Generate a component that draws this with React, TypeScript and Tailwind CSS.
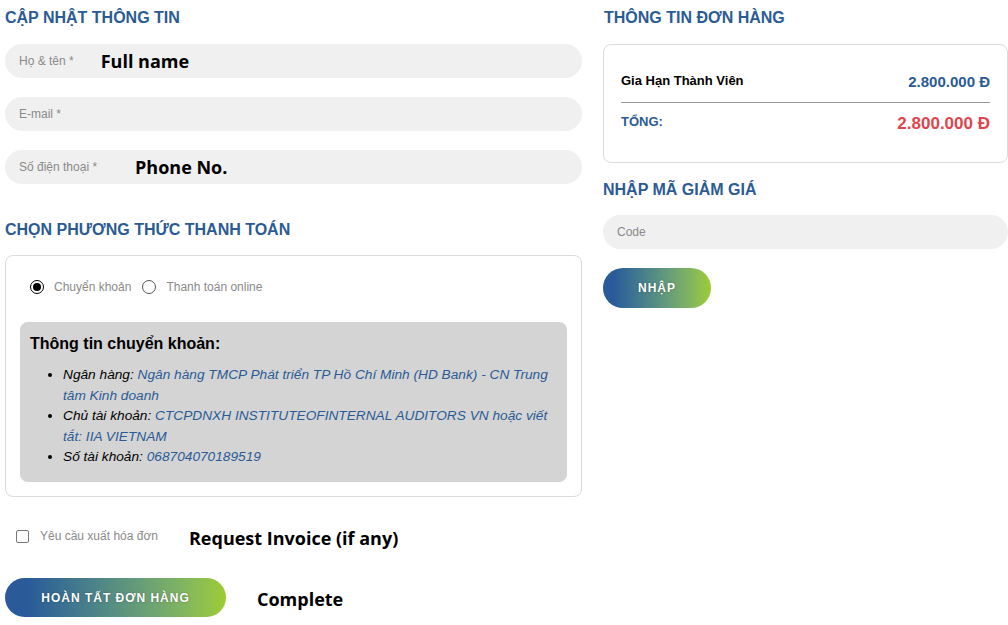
import React from 'react';

const heading = "text-[16px] leading-[18px] font-bold text-[#2b5b94] font-['Liberation_Sans',Arial,sans-serif]";
const note = "font-['Open_Sans',sans-serif] font-bold text-[18px] leading-[22px] text-black";

const Pill: React.FC<{ placeholder: string; note?: string; noteLeft?: string; className?: string }> = ({ placeholder, note: label, noteLeft, className }) => (
  <div className={`h-[34px] rounded-full bg-[#f0f0f0] flex items-center pl-[14px] ${className ?? ''}`}>
    <span className="text-[12px] text-[#8a8a8a]">{placeholder}</span>
    {label && <span className={`${note} ${noteLeft}`}>{label}</span>}
  </div>
);

const GradientButton: React.FC<{ label: string; className?: string }> = ({ label, className }) => (
  <button
    type="button"
    className={`rounded-full bg-linear-to-r from-[#2a5a99] from-10% to-[#9dcc30] text-white font-bold text-[12px] tracking-[1px] [text-shadow:0_0_2px_rgba(0,0,0,0.35)] ${className ?? ''}`}
  >
    {label}
  </button>
);

export default function App() {
  return (
    <div className="w-[1008px] h-[625px] overflow-hidden bg-white pl-[5px] font-['Liberation_Sans',Arial,sans-serif]">
      <div className="grid grid-cols-[577px_1fr] gap-x-[21px]">
        {/* left column */}
        <div className="flex flex-col">
          <h2 className={`${heading} mt-[9px]`}>CẬP NHẬT THÔNG TIN</h2>
          <Pill className="mt-[17px]" placeholder="Họ & tên *" note="Full name" noteLeft="ml-[27px]" />
          <Pill className="mt-[19px]" placeholder="E-mail *" />
          <Pill className="mt-[19px]" placeholder="Số điện thoại *" note="Phone No." noteLeft="ml-[38px]" />

          <h2 className={`${heading} mt-[37px]`}>CHỌN PHƯƠNG THỨC THANH TOÁN</h2>

          <div className="mt-[16px] h-[242px] border border-[#dcdcdc] rounded-[8px] flex flex-col">
            <div className="flex items-center mt-[23px] ml-[24px] h-[16px] text-[12px] text-[#8a8a8a]">
              <span className="w-[14px] h-[14px] rounded-full border-[1.5px] border-black flex items-center justify-center">
                <span className="w-[8px] h-[8px] rounded-full bg-black" />
              </span>
              <span className="ml-[10px]">Chuyển khoản</span>
              <span className="ml-[11px] w-[14px] h-[14px] rounded-full border-[1.5px] border-[#555]" />
              <span className="ml-[10px]">Thanh toán online</span>
            </div>

            <div className="mt-[27px] mx-[14px] h-[160px] rounded-[8px] bg-[#d4d4d4] pl-[10px] pr-[6px] pt-[12px]">
              <h3 className="text-[16px] leading-[20px] font-bold text-black">Thông tin chuyển khoản:</h3>
              <ul className="list-disc pl-[33px] mt-[11px] text-[13.7px] leading-[20.5px] italic text-black">
                <li>
                  Ngân hàng: <span className="text-[#2b5b94]">Ngân hàng TMCP Phát triển TP Hồ Chí Minh (HD Bank) - CN Trung tâm Kinh doanh</span>
                </li>
                <li>
                  Chủ tài khoản: <span className="text-[#2b5b94]">CTCPDNXH INSTITUTEOFINTERNAL AUDITORS VN hoặc viết tắt: IIA VIETNAM</span>
                </li>
                <li>
                  Số tài khoản: <span className="text-[#2b5b94]">068704070189519</span>
                </li>
              </ul>
            </div>
          </div>

          <div className="flex items-center mt-[30px] h-[18px]">
            <span className="ml-[11px] w-[13px] h-[13px] border border-[#777] rounded-[2px]" />
            <span className="ml-[11px] text-[12px] text-[#8a8a8a]">Yêu cầu xuất hóa đơn</span>
            <span className={`${note} ml-[31px] mt-[4px]`}>Request Invoice (if any)</span>
          </div>

          <div className="flex items-center mt-[33px]">
            <GradientButton label="HOÀN TẤT ĐƠN HÀNG" className="w-[221px] h-[39px]" />
            <span className={`${note} ml-[31px] mt-[2px]`}>Complete</span>
          </div>
        </div>

        {/* right column */}
        <div className="flex flex-col">
          <h2 className={`${heading} mt-[9px] ml-[1px]`}>THÔNG TIN ĐƠN HÀNG</h2>
          <div className="mt-[17px] h-[119px] border border-[#dcdcdc] rounded-[8px] px-[17px] pt-[26px]">
            <div className="flex items-center justify-between h-[20px]">
              <span className="text-[13px] font-bold text-black">Gia Hạn Thành Viên</span>
              <span className="text-[15px] font-bold text-[#2b5b94] mt-[2px]">2.800.000 Đ</span>
            </div>
            <div className="mt-[11px] border-t border-[#9a9a9a]" />
            <div className="flex items-start justify-between mt-[8px]">
              <span className="text-[13px] font-bold text-[#2b5b94] mt-[1px]">TỔNG:</span>
              <span className="text-[17px] font-bold text-[#e2444b]">2.800.000 Đ</span>
            </div>
          </div>

          <h2 className={`${heading} mt-[18px]`}>NHẬP MÃ GIẢM GIÁ</h2>
          <Pill className="mt-[16px]" placeholder="Code" />
          <GradientButton label="NHẬP" className="mt-[19px] w-[108px] h-[40px] tracking-[0.5px]" />
        </div>
      </div>
    </div>
  );
}
